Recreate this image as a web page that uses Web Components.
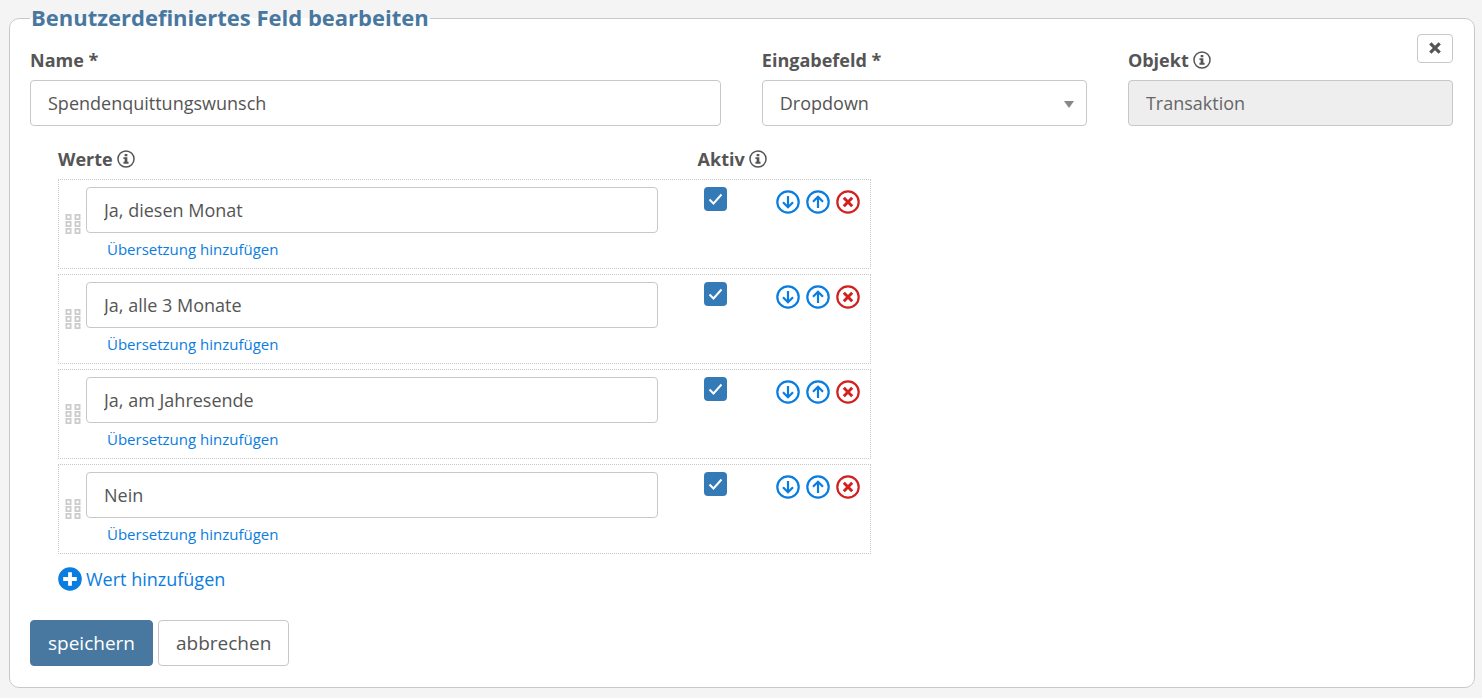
<!DOCTYPE html>
<html lang="de">
<head>
<meta charset="utf-8">
<title>Benutzerdefiniertes Feld bearbeiten</title>
<style>
  html { background: #f4f4f4; }
  body {
    margin: 0;
    padding: 3px 7px 10px 9px;
    font: 18px/26px "Open Sans", sans-serif;
    color: #555;
    --line: #c8c8c8;
    --brand: #4878a0;
    --link: #0a7de0;
    --danger: #d22020;
  }
</style>
</head>
<body>
<edit-panel heading="Benutzerdefiniertes Feld bearbeiten">
  <field-grid>
    <text-field label="Name *" value="Spendenquittungswunsch"></text-field>
    <select-field label="Eingabefeld *" options="Dropdown,Textfeld,Datum"></select-field>
    <text-field label="Objekt" value="Transaktion" info locked></text-field>
  </field-grid>
  <value-list>
    <value-row value="Ja, diesen Monat"></value-row>
    <value-row value="Ja, alle 3 Monate"></value-row>
    <value-row value="Ja, am Jahresende"></value-row>
    <value-row value="Nein"></value-row>
  </value-list>
  <action-button slot="actions" kind="primary">speichern</action-button>
  <action-button slot="actions">abbrechen</action-button>
</edit-panel>

<script>
  const icons = {
    info: `<circle cx="12" cy="12" r="10.7" fill="none" stroke="currentColor" stroke-width="2"/>
      <path fill="currentColor" d="M10.2 5.2h3.6v3.1h-3.6zM8.6 9.7h5.2v6.1h1.6v2.4H8.6v-2.4h1.6v-3.7H8.6z"/>`,
    down: `<circle cx="12" cy="12" r="10.7" fill="none" stroke="currentColor" stroke-width="2.2"/>
      <path fill="none" stroke="currentColor" stroke-width="2.2" d="M12 6v11M7 12.2l5 5 5-5"/>`,
    up: `<circle cx="12" cy="12" r="10.7" fill="none" stroke="currentColor" stroke-width="2.2"/>
      <path fill="none" stroke="currentColor" stroke-width="2.2" d="M12 18V7M7 11.8l5-5 5 5"/>`,
    remove: `<circle cx="12" cy="12" r="10.7" fill="none" stroke="currentColor" stroke-width="2.2"/>
      <path fill="none" stroke="currentColor" stroke-width="3" d="M7.8 7.8l8.4 8.4M16.2 7.8l-8.4 8.4"/>`,
    plus: `<circle cx="12" cy="12" r="11.8" fill="currentColor"/>
      <path fill="none" stroke="#fff" stroke-width="3.8" d="M12 5.2v13.6M5.2 12h13.6"/>`,
    close: `<path fill="none" stroke="currentColor" stroke-width="6.4" d="M2.6 2.6l18.8 18.8M21.4 2.6L2.6 21.4"/>`,
    grip: `<path fill="none" stroke="currentColor" stroke-width="1.8"
      d="M5.4 2.9h4.2v4.2h-4.2zM14.4 2.9h4.2v4.2h-4.2zM5.4 9.9h4.2v4.2h-4.2zM14.4 9.9h4.2v4.2h-4.2zM5.4 16.9h4.2v4.2h-4.2zM14.4 16.9h4.2v4.2h-4.2z"/>`
  };

  class Base extends HTMLElement {
    connectedCallback() {
      if (this.shadowRoot) return;
      this.attachShadow({ mode: "open" }).innerHTML = this.render();
    }
    attr(name) { return this.getAttribute(name) || ""; }
  }

  const control = `
    .control {
      box-sizing: border-box; width: 100%; height: 46px; margin: 0; padding: 0 17px;
      border: 1px solid var(--line); border-radius: 4px; background: #fff;
      font: inherit; color: inherit; display: block;
    }`;
  const label = `
    label, .label { display: flex; align-items: center; gap: 4px; font-weight: 700; }`;

  customElements.define("ui-icon", class extends Base {
    render() {
      return `<style>
        :host { display: block; width: 24px; height: 24px; }
        svg { display: block; width: 100%; height: 100%; }
      </style>
      <svg viewBox="0 0 24 24" aria-hidden="true">${icons[this.attr("name")]}</svg>`;
    }
  });

  customElements.define("edit-panel", class extends Base {
    render() {
      return `<style>
        :host { display: block; }
        fieldset {
          position: relative; margin: 0; min-width: 0; padding: 14px 21px 21px 20px;
          border: 1px solid var(--line); border-radius: 10px; background: #fff;
        }
        legend { padding: 0 1px 2px; font-size: 22px; line-height: 28px; font-weight: 700; color: var(--brand); }
        .close {
          position: absolute; top: 1px; right: 21px;
          display: grid; place-items: center; width: 36px; height: 29px; padding: 0 0 1px;
          border: 1px solid var(--line); border-radius: 4px; background: #fff; color: inherit;
        }
        .close ui-icon { width: 12px; height: 12px; }
        .actions { display: flex; gap: 5px; margin-top: 23px; }
      </style>
      <fieldset>
        <legend>${this.attr("heading")}</legend>
        <button class="close" type="button" aria-label="Schließen"><ui-icon name="close"></ui-icon></button>
        <slot></slot>
        <div class="actions"><slot name="actions"></slot></div>
      </fieldset>`;
    }
  });

  customElements.define("field-grid", class extends Base {
    render() {
      return `<style>
        :host { display: grid; grid-template-columns: 17fr 8fr 8fr; gap: 41px; }
      </style><slot></slot>`;
    }
  });

  customElements.define("text-field", class extends Base {
    render() {
      return `<style>
        :host { display: block; }
        ${label} ${control}
        label { margin-bottom: 7px; }
        ui-icon { width: 18px; height: 18px; }
        .control:disabled { background: #eee; color: #666; opacity: 1; }
      </style>
      <label for="field">${this.attr("label")}${this.hasAttribute("info") ? '<ui-icon name="info"></ui-icon>' : ""}</label>
      <input class="control" id="field" type="text" value="${this.attr("value")}" ${this.hasAttribute("locked") ? "disabled" : ""}>`;
    }
  });

  customElements.define("select-field", class extends Base {
    render() {
      return `<style>
        :host { display: block; }
        ${label} ${control}
        label { margin-bottom: 7px; }
        .wrap { display: grid; align-items: center; }
        .wrap > * { grid-area: 1 / 1; }
        select { appearance: none; }
        .arrow {
          justify-self: end; margin: 2px 13px 0 0; pointer-events: none;
          border: 5px solid transparent; border-top: 7px solid #888; border-bottom: 0;
        }
      </style>
      <label for="field">${this.attr("label")}</label>
      <div class="wrap">
        <select class="control" id="field">${this.attr("options").split(",").map(o => `<option>${o}</option>`).join("")}</select>
        <span class="arrow"></span>
      </div>`;
    }
  });

  customElements.define("value-list", class extends Base {
    render() {
      return `<style>
        :host { display: block; margin: 20px 2px 0 28px; --side: 213px; }
        ${label}
        .head, .rows { width: calc(100% * 7 / 12); }
        .head { display: grid; grid-template-columns: 1fr calc(var(--side) - 40px); margin-bottom: 7px; }
        .head ui-icon { width: 18px; height: 18px; }
        .rows { display: grid; gap: 5px; }
        a { display: inline-flex; align-items: center; gap: 4px; margin-top: 12px; color: var(--link); text-decoration: none; }
      </style>
      <div class="head">
        <div class="label">Werte<ui-icon name="info"></ui-icon></div>
        <div class="label">Aktiv<ui-icon name="info"></ui-icon></div>
      </div>
      <div class="rows"><slot></slot></div>
      <a href="#"><ui-icon name="plus"></ui-icon>Wert hinzufügen</a>`;
    }
  });

  customElements.define("value-row", class extends Base {
    render() {
      return `<style>
        :host {
          box-sizing: border-box; display: grid; grid-template-columns: 27px 1fr calc(var(--side) - 1px);
          border: 1px dotted var(--line); padding: 7px 0 8px;
        }
        ${control}
        .grip { align-self: center; justify-self: center; color: #ccc; }
        .entry a {
          display: block; width: fit-content; margin: 5px 0 0 21px;
          font-size: 15px; line-height: 22px; color: var(--link); text-decoration: none;
        }
        .side { display: flex; align-items: flex-start; padding: 0 10px 0 46px; }
        input[type=checkbox] {
          appearance: none; width: 23px; height: 24px; margin: 0; border-radius: 4px;
          background: #337ab7 url('data:image/svg+xml,<svg xmlns="http://www.w3.org/2000/svg" viewBox="0 0 23 24"><path d="M5.5 12.5l4 4 8-9" fill="none" stroke="white" stroke-width="2"/></svg>') center / 100% 100%;
        }
        .tools { display: flex; gap: 6px; margin: 3px 0 0 auto; }
        .tools button { display: block; margin: 0; padding: 0; border: 0; background: none; color: var(--link); }
        .tools .remove { color: var(--danger); }
      </style>
      <ui-icon class="grip" name="grip"></ui-icon>
      <div class="entry">
        <input class="control" type="text" aria-label="Wert" value="${this.attr("value")}">
        <a href="#">Übersetzung hinzufügen</a>
      </div>
      <div class="side">
        <input type="checkbox" aria-label="Aktiv" checked>
        <div class="tools">
          <button type="button" aria-label="Nach unten"><ui-icon name="down"></ui-icon></button>
          <button type="button" aria-label="Nach oben"><ui-icon name="up"></ui-icon></button>
          <button class="remove" type="button" aria-label="Entfernen"><ui-icon name="remove"></ui-icon></button>
        </div>
      </div>`;
    }
  });

  customElements.define("action-button", class extends Base {
    render() {
      return `<style>
        :host { display: block; }
        button {
          height: 46px; padding: 0 17px; border: 1px solid var(--line); border-radius: 4px;
          background: #fff; color: inherit; font: inherit; font-size: 19px;
        }
        :host([kind=primary]) button { border-color: var(--brand); background: var(--brand); color: #fff; }
      </style>
      <button type="button"><slot></slot></button>`;
    }
  });
</script>
</body>
</html>
